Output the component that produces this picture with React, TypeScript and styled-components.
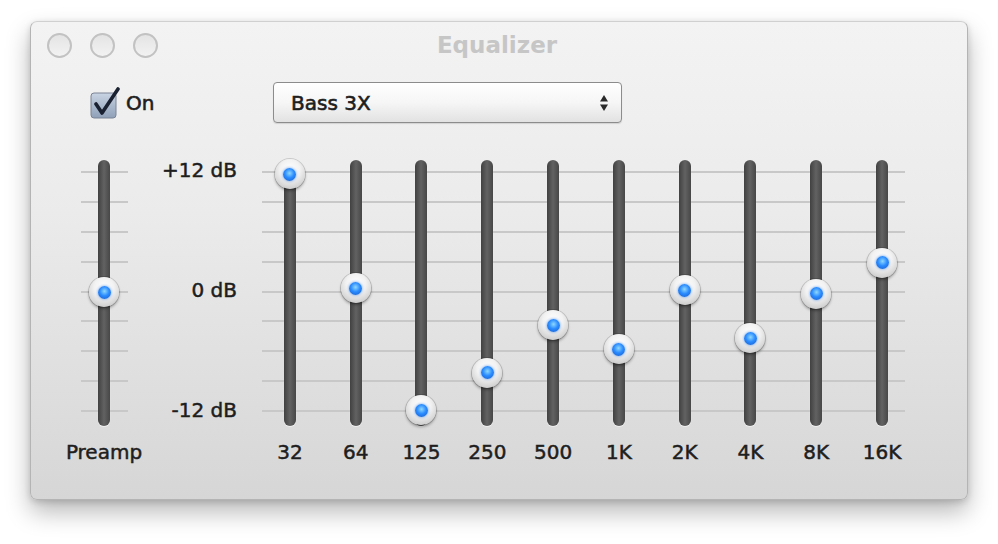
import { FC } from 'react'
import styled, { createGlobalStyle, css } from 'styled-components'

const GlobalStyle = createGlobalStyle`
  html, body {
    margin: 0;
    padding: 0;
    background: #ffffff;
  }
  body {
    font-family: "DejaVu Sans", "Liberation Sans", sans-serif;
  }
`

const gridLines = css`
  background-image: repeating-linear-gradient(
    to bottom,
    #c8c8c8 0,
    #c8c8c8 2px,
    transparent 2px,
    transparent 29.875px
  );
  background-repeat: no-repeat;
`

const Page = styled.div`
  width: 998px;
  height: 544px;
  padding: 21px 0 0 30px;
  box-sizing: border-box;
`

const Window = styled.div`
  width: 938px;
  height: 479px;
  box-sizing: border-box;
  border: 1px solid #b4b4b4;
  border-top-color: #d0d0d0;
  border-radius: 7px;
  background: linear-gradient(to bottom, #f3f3f3 0%, #ebebeb 40%, #d6d6d6 100%);
  box-shadow: 0 12px 24px rgba(0, 0, 0, 0.28), 0 2px 6px rgba(0, 0, 0, 0.15);
  display: flex;
  flex-direction: column;
`

const TitleBar = styled.div`
  height: 46px;
  display: grid;
  grid-template-columns: 1fr auto 1fr;
  align-items: center;
  padding: 0 16px;
`

const Lights = styled.div`
  display: flex;
  gap: 18px;
`

const Light = styled.div`
  width: 25px;
  height: 25px;
  box-sizing: border-box;
  border-radius: 50%;
  border: 2px solid #c2c2c2;
  background: linear-gradient(to bottom, #e4e4e4, #f2f2f2);
`

const Title = styled.div`
  font-size: 23px;
  font-weight: bold;
  color: #c6c6c6;
  text-align: center;
  padding-right: 4px;
`

const Controls = styled.div`
  display: flex;
  align-items: center;
  height: 41px;
  margin-top: 14px;
  padding-left: 59px;
`

const Toggle = styled.label`
  width: 183px;
  display: flex;
  align-items: center;
  gap: 6px;
  font-size: 20px;
  color: #1e1e1e;
  -webkit-text-stroke: 0.6px #1e1e1e;
`

const Select = styled.div`
  width: 349px;
  height: 41px;
  box-sizing: border-box;
  border: 1px solid #8c8c8c;
  border-radius: 4px;
  background: linear-gradient(to bottom, #ffffff 0%, #f6f6f6 50%, #e2e2e2 100%);
  box-shadow: 0 1px 1px rgba(0, 0, 0, 0.12);
  display: flex;
  align-items: center;
  justify-content: space-between;
  padding: 0 12px 0 17px;
  font-size: 20px;
  color: #1e1e1e;
  -webkit-text-stroke: 0.6px #1e1e1e;
`

const Sliders = styled.div`
  display: flex;
  margin-top: 37px;
  padding-left: 33px;
`

const Column = styled.div<{ $width: number }>`
  width: ${(p) => p.$width}px;
  display: flex;
  flex-direction: column;
  align-items: center;
`

const Rail = styled.div<{ $lines?: number }>`
  position: relative;
  align-self: stretch;
  height: 266px;
  display: flex;
  justify-content: center;
  ${(p) =>
    p.$lines &&
    css`
      ${gridLines};
      background-size: ${p.$lines}px 241px;
      background-position: center 11px;
    `}
`

const Track = styled.div`
  width: 12px;
  height: 266px;
  border-radius: 6px;
  background: linear-gradient(to right, #414141, #626262 50%, #474747);
  box-shadow: 0 1px 1px rgba(255, 255, 255, 0.6);
`

const Knob = styled.div`
  position: absolute;
  left: 50%;
  width: 30px;
  height: 30px;
  margin-left: -15px;
  border-radius: 50%;
  background: radial-gradient(circle at 50% 35%, #ffffff 0%, #f2f2f2 40%, #cfcfcf 78%, #adadad 100%);
  box-shadow: 0 2px 3px rgba(0, 0, 0, 0.35), 0 0 0 1px rgba(0, 0, 0, 0.14);
  display: flex;
  align-items: center;
  justify-content: center;
`

const Dot = styled.div`
  width: 13px;
  height: 13px;
  border-radius: 50%;
  background: radial-gradient(circle at 50% 40%, #8fd8ff 0%, #2b8cff 45%, #1458c8 100%);
  box-shadow: 0 0 3px rgba(20, 110, 230, 0.7);
`

const Label = styled.div`
  margin-top: 15px;
  font-size: 20px;
  line-height: 22px;
  color: #1e1e1e;
  -webkit-text-stroke: 0.5px #1e1e1e;
  white-space: nowrap;
`

const Scale = styled.div`
  width: 93px;
  height: 262px;
  margin-top: -1px;
  display: flex;
  flex-direction: column;
  justify-content: space-between;
  align-items: flex-end;
  font-size: 20px;
  line-height: 22px;
  color: #1e1e1e;
  -webkit-text-stroke: 0.5px #1e1e1e;
`

const Bands = styled.div`
  display: flex;
  margin-left: 20px;
  ${gridLines};
  background-size: 643px 241px;
  background-position: 5px 11px;
`

const CheckBox: FC = () => (
  <svg width="30" height="32" viewBox="0 0 30 32">
    <defs>
      <linearGradient id="cb" x1="0" y1="0" x2="0" y2="1">
        <stop offset="0" stopColor="#c9d4e3" />
        <stop offset="1" stopColor="#8fa0b8" />
      </linearGradient>
    </defs>
    <rect x="1" y="6" width="25" height="25" rx="3" fill="url(#cb)" stroke="#7a8496" strokeWidth="1" />
    <path d="M6 17 L12 26 L28 2" fill="none" stroke="#1a2130" strokeWidth="3.6" strokeLinecap="round" strokeLinejoin="round" />
  </svg>
)

const Arrows: FC = () => (
  <svg width="10" height="18" viewBox="0 0 10 18">
    <path d="M5 1 L9 7.5 L1 7.5 Z" fill="#2a2a2a" />
    <path d="M5 17 L9 10.5 L1 10.5 Z" fill="#2a2a2a" />
  </svg>
)

// track is 266px tall; +12 dB sits 14px from the top, -12 dB 250px
const knobTop = (v: number) => 132 - (v * 118) / 12 - 15

const Slider: FC<{ value: number; label: string; width: number; lines?: number }> = ({
  value,
  label,
  width,
  lines,
}) => (
  <Column $width={width}>
    <Rail $lines={lines}>
      <Track />
      <Knob style={{ top: knobTop(value) }}>
        <Dot />
      </Knob>
    </Rail>
    <Label>{label}</Label>
  </Column>
)

const bands = [
  { label: '32', value: 12 },
  { label: '64', value: 0.4 },
  { label: '125', value: -12 },
  { label: '250', value: -8.2 },
  { label: '500', value: -3.4 },
  { label: '1K', value: -5.8 },
  { label: '2K', value: 0.2 },
  { label: '4K', value: -4.7 },
  { label: '8K', value: -0.2 },
  { label: '16K', value: 3 },
]

const App: FC = () => {
  return (
    <Page>
      <GlobalStyle />
      <Window>
        <TitleBar>
          <Lights>
            <Light />
            <Light />
            <Light />
          </Lights>
          <Title>Equalizer</Title>
          <div />
        </TitleBar>

        <Controls>
          <Toggle>
            <CheckBox />
            On
          </Toggle>
          <Select>
            Bass 3X
            <Arrows />
          </Select>
        </Controls>

        <Sliders>
          <Slider value={0} label="Preamp" width={80} lines={47} />
          <Scale>
            <span>+12 dB</span>
            <span>0 dB</span>
            <span>-12 dB</span>
          </Scale>
          <Bands>
            {bands.map((b) => (
              <Slider key={b.label} value={b.value} label={b.label} width={65.8} />
            ))}
          </Bands>
        </Sliders>
      </Window>
    </Page>
  )
}

export default App
